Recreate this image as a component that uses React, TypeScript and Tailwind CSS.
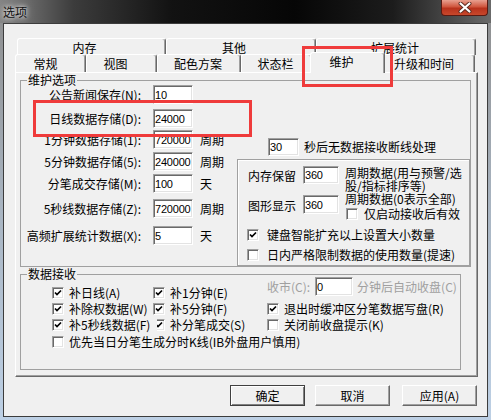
import React from 'react'

const backTabs = [
  { t: '内存', w: 'w-[149px]', p: 'pr-[14px]' },
  { t: '其他', w: 'w-[150px]', p: 'pr-[14px]' },
  { t: '扩展统计', w: 'w-[160px]', p: 'pr-[2px]' },
]

const frontTabs = [
  { t: '常规', w: 'w-[71px]', p: 'pr-[10px]' },
  { t: '视图', w: 'w-[71px]', p: 'pr-[12px]' },
  { t: '配色方案', w: 'w-[84px]', p: 'pr-[2px]' },
  { t: '状态栏', w: 'w-[71px]', p: 'pr-[2px]' },
  { t: '维护', w: 'w-[71px]', p: 'pr-[12px]', on: true },
  { t: '升级和时间', w: 'w-[92px]', p: 'pr-[10px]' },
]

const storeRows = [
  { label: '公告新闻保存(N):', value: '10', unit: '', mt: '-mt-[1px]' },
  { label: '日线数据存储(D):', value: '24000', unit: '', mt: 'mt-[5px]' },
  { label: '1分钟数据存储(1):', value: '720000', unit: '周期', mt: 'mt-[2px]' },
  { label: '5分钟数据存储(5):', value: '240000', unit: '周期', mt: 'mt-[3px]' },
  { label: '分笔成交存储(M):', value: '100', unit: '天', mt: 'mt-[3px]' },
  { label: '5秒线数据存储(Z):', value: '720000', unit: '周期', mt: 'mt-[6px]' },
  { label: '高频扩展统计数据(X):', value: '5', unit: '天', mt: 'mt-[8px]' },
]

function Field({ value, className = '' }: { value: string; className?: string }) {
  return (
    <div
      className={`shrink-0 flex items-center pl-[1px] bg-white border border-t-[#a0a0a0] border-l-[#a0a0a0] border-r-white border-b-white shadow-[inset_1px_1px_0_#696969,inset_-1px_-1px_0_#e3e3e3] font-['Liberation_Sans',sans-serif] text-[11px] tracking-[-0.2px] overflow-hidden whitespace-nowrap ${className}`}
    >
      {value}
    </div>
  )
}

function Check({ on = false }: { on?: boolean }) {
  return (
    <span className="shrink-0 inline-flex items-center justify-center w-[12px] h-[12px] bg-white border border-t-[#a0a0a0] border-l-[#a0a0a0] border-r-white border-b-white shadow-[inset_1px_1px_0_#696969,inset_-1px_-1px_0_#e3e3e3]">
      {on && (
        <svg width="8" height="8" viewBox="0 0 8 8">
          <path d="M1 3.5 L3 5.6 L7 1.5" stroke="#000" strokeWidth="1.7" fill="none" />
        </svg>
      )}
    </span>
  )
}

function CheckItem({ on, text, w }: { on?: boolean; text: string; w: string }) {
  return (
    <div className={`flex items-center ${w}`}>
      <Check on={on} />
      <span className="ml-[5px] whitespace-nowrap">{text}</span>
    </div>
  )
}

function Btn({ text, main = false, className = '' }: { text: string; main?: boolean; className?: string }) {
  const edge = main
    ? 'border border-[#404040] shadow-[inset_1px_1px_0_#fff,inset_-1px_-1px_0_#808080]'
    : 'border border-t-white border-l-white border-r-[#696969] border-b-[#696969] shadow-[inset_-1px_-1px_0_#a0a0a0]'
  return (
    <div className={`w-[75px] h-[21px] flex items-center justify-center bg-[#f0f0f0] ${edge} ${className}`}>
      {text}
    </div>
  )
}

const App = () => {
  return (
    <div className="relative w-[491px] h-[420px] overflow-hidden bg-[linear-gradient(180deg,#8c8c8c_0%,#a9b5c2_50%,#bdd0e5_100%)] font-['Noto_Sans_CJK_SC',sans-serif] text-[12px] leading-[14px] text-black">
      {/* title bar */}
      <div className="h-[23px] flex items-start justify-between bg-[linear-gradient(90deg,#858585_0%,#3c3c3c_15%,#121212_35%,#060606_60%,#1c1c1c_80%,#6a6a6a_100%)]">
        <span className="pl-[3px] pt-[5px] text-[12px] text-[#101010] [text-shadow:0_0_4px_#fff,0_0_8px_rgba(255,255,255,0.7)]">选项</span>
        <div className="mr-[3px] w-[47px] h-[16px] flex items-center justify-center rounded-b-[4px] border border-t-0 border-[#5a1a12] bg-[linear-gradient(180deg,#e8a090_0%,#d0563e_45%,#b8321c_55%,#c8482c_100%)]">
          <svg width="14" height="11" viewBox="0 0 14 11">
            <path d="M2.5 1.5 L11.5 9.5 M11.5 1.5 L2.5 9.5" stroke="#5a2a20" strokeWidth="4" strokeLinecap="round" />
            <path d="M2.5 1.5 L11.5 9.5 M11.5 1.5 L2.5 9.5" stroke="#fff" strokeWidth="2.2" strokeLinecap="round" />
          </svg>
        </div>
      </div>

      {/* client */}
      <div className="ml-[3px] w-[485px] h-[394px] bg-[#f0f0f0] border border-[#3c3c3c]">
        <div className="ml-[11px] mt-[14px]">
          {/* back row */}
          <div className="flex h-[16px] pl-[2px]">
            {backTabs.map((b) => (
              <div
                key={b.t}
                className={`${b.w} h-[17px] flex justify-center pt-[2px] ${b.p} bg-[#f0f0f0] border-t border-l border-white border-r border-r-[#696969] rounded-t-[3px] shadow-[inset_-1px_0_0_#a0a0a0]`}
              >
                {b.t}
              </div>
            ))}
          </div>
          {/* front row */}
          <div className="flex items-end h-[18px]">
            {frontTabs.map((f) =>
              f.on ? (
                <div
                  key={f.t}
                  className={`relative z-10 -mx-[2px] -mb-[1px] w-[75px] h-[21px] flex justify-center pt-[2px] ${f.p} bg-[#f0f0f0] border-t border-l border-white border-r border-r-[#696969] rounded-t-[3px] shadow-[inset_-1px_0_0_#a0a0a0]`}
                >
                  {f.t}
                </div>
              ) : (
                <div
                  key={f.t}
                  className={`${f.w} h-[18px] flex justify-center pt-[2px] ${f.p} bg-[#f0f0f0] border-t border-l border-white border-r border-r-[#696969] rounded-t-[3px] shadow-[inset_-1px_0_0_#a0a0a0]`}
                >
                  {f.t}
                </div>
              )
            )}
          </div>

          {/* tab page */}
          <div className="w-[463px] h-[305px] border border-t-white border-l-white border-r-[#696969] border-b-[#696969] shadow-[inset_-1px_-1px_0_#a0a0a0]">
            <fieldset className="ml-[4px] w-[451px] h-[194px] border border-[#a0a0a0]">
              <legend className="ml-[6px] px-[1px] leading-[14px]">维护选项</legend>
              <div className="flex -mt-[1px]">
                {/* left column */}
                <div className="w-[216px] flex flex-col">
                  {storeRows.map((r) => (
                    <div key={r.label} className={`flex items-center h-[19px] ${r.mt}`}>
                      <span className="w-[120px] text-right whitespace-nowrap">{r.label}</span>
                      <Field value={r.value} className="ml-[12px] w-[40px] h-[19px]" />
                      <span className="ml-[7px]">{r.unit}</span>
                    </div>
                  ))}
                </div>
                {/* right column */}
                <div className="w-[233px] flex flex-col">
                  <div className="mt-[52px] h-[18px] flex items-center">
                    <Field value="30" className="ml-[31px] w-[31px] h-[18px]" />
                    <span className="ml-[5px] whitespace-nowrap">秒后无数据接收断线处理</span>
                  </div>
                  <div className="mt-[3px] w-[233px] h-[107px] border border-[#a0a0a0] shadow-[inset_1px_1px_0_#fff] flex flex-col">
                    <div className="mt-[6px] flex items-start">
                      <span className="ml-[10px] mt-[3px] whitespace-nowrap">内存保留</span>
                      <Field value="360" className="ml-[7px] w-[36px] h-[18px]" />
                      <span className="ml-[6px] leading-[13px] whitespace-nowrap">
                        周期数据(用与预警/选
                        <br />
                        股/指标排序等)
                      </span>
                    </div>
                    <div className="flex items-start">
                      <span className="ml-[10px] mt-[7px] whitespace-nowrap">图形显示</span>
                      <Field value="360" className="ml-[7px] mt-[3px] w-[36px] h-[19px]" />
                      <div className="ml-[6px] flex flex-col">
                        <span className="mt-[1px] leading-[12px] whitespace-nowrap">周期数据(0表示全部)</span>
                        <div className="mt-[2px] ml-[1px] flex items-center">
                          <Check />
                          <span className="ml-[6px] whitespace-nowrap">仅启动接收后有效</span>
                        </div>
                      </div>
                    </div>
                    <div className="mt-[7px] ml-[9px] h-[13px] flex items-center">
                      <Check on />
                      <span className="ml-[8px] whitespace-nowrap">键盘智能扩充以上设置大小数量</span>
                    </div>
                    <div className="mt-[7px] ml-[9px] h-[13px] flex items-center">
                      <Check />
                      <span className="ml-[8px] whitespace-nowrap">日内严格限制数据的使用数量(提速)</span>
                    </div>
                  </div>
                </div>
              </div>
            </fieldset>

            <fieldset className="ml-[4px] w-[441px] h-[103px] border border-[#a0a0a0]">
              <legend className="ml-[6px] px-[1px] leading-[14px]">数据接收</legend>
              <div className="pl-[31px] flex flex-col">
                <div className="mt-[4px] h-[16px] flex items-center">
                  <CheckItem on text="补日线(A)" w="w-[101px]" />
                  <CheckItem on text="补1分钟(E)" w="w-[114px]" />
                  <div className="self-start -mt-[8px] h-[19px] flex items-center text-[#a0a0a0]">
                    <span className="whitespace-nowrap">收市(C):</span>
                    <Field value="0" className="ml-[5px] w-[38px] h-[19px] text-black" />
                    <span className="ml-[4px] whitespace-nowrap">分钟后自动收盘(C)</span>
                  </div>
                </div>
                <div className="h-[16px] flex items-center">
                  <CheckItem on text="补除权数据(W)" w="w-[101px]" />
                  <CheckItem on text="补5分钟(F)" w="w-[114px]" />
                  <CheckItem on text="退出时缓冲区分笔数据写盘(R)" w="w-[180px]" />
                </div>
                <div className="h-[16px] flex items-center">
                  <div className="relative z-10 w-[105px] -mr-[4px] flex items-center bg-[#f0f0f0]">
                    <Check on />
                    <span className="ml-[5px] whitespace-nowrap">补5秒线数据(F)</span>
                  </div>
                  <CheckItem on text="补分笔成交(S)" w="w-[114px]" />
                  <CheckItem text="关闭前收盘提示(K)" w="w-[140px]" />
                </div>
                <div className="mt-[1px] h-[16px] flex items-center">
                  <CheckItem text="优先当日分笔生成分时K线(IB外盘用户慎用)" w="w-[300px]" />
                </div>
              </div>
            </fieldset>
          </div>
        </div>

        {/* buttons */}
        <div className="mt-[8px] flex">
          <Btn text="确定" main className="ml-[226px]" />
          <Btn text="取消" className="ml-[10px]" />
          <Btn text="应用(A)" className="ml-[12px]" />
        </div>
      </div>

      {/* annotation boxes */}
      <div className="absolute left-[302px] top-[46px] w-[91px] h-[41px] border-[3px] border-[#ef3b3b] pointer-events-none" />
      <div className="absolute left-[33px] top-[100px] w-[219px] h-[37px] border-[3px] border-[#ef3b3b] pointer-events-none" />
    </div>
  )
}

export default App
